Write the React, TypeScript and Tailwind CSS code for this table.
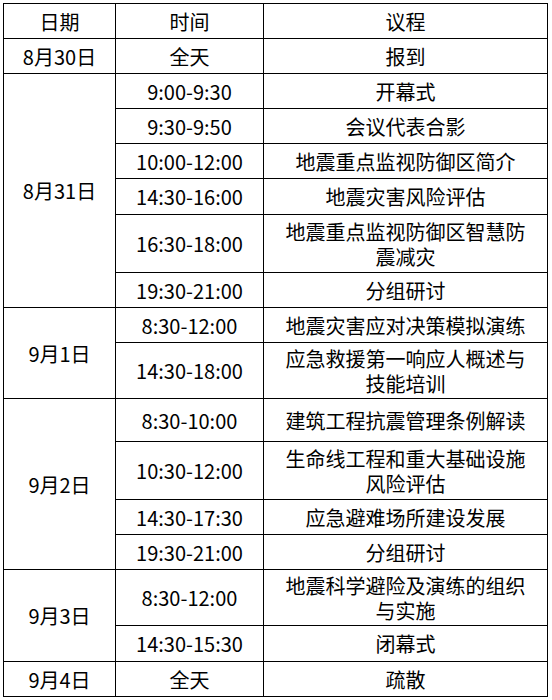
import { Fragment } from "react";

type Item = { time: string; agenda: string[]; h: number };
type Day = { date: string; items: Item[] };

const days: Day[] = [
  { date: "8月30日", items: [{ time: "全天", agenda: ["报到"], h: 35 }] },
  {
    date: "8月31日",
    items: [
      { time: "9:00-9:30", agenda: ["开幕式"], h: 35 },
      { time: "9:30-9:50", agenda: ["会议代表合影"], h: 35 },
      { time: "10:00-12:00", agenda: ["地震重点监视防御区简介"], h: 35 },
      { time: "14:30-16:00", agenda: ["地震灾害风险评估"], h: 36 },
      { time: "16:30-18:00", agenda: ["地震重点监视防御区智慧防", "震减灾"], h: 58 },
      { time: "19:30-21:00", agenda: ["分组研讨"], h: 35 },
    ],
  },
  {
    date: "9月1日",
    items: [
      { time: "8:30-12:00", agenda: ["地震灾害应对决策模拟演练"], h: 35 },
      { time: "14:30-18:00", agenda: ["应急救援第一响应人概述与", "技能培训"], h: 56 },
    ],
  },
  {
    date: "9月2日",
    items: [
      { time: "8:30-10:00", agenda: ["建筑工程抗震管理条例解读"], h: 43 },
      { time: "10:30-12:00", agenda: ["生命线工程和重大基础设施", "风险评估"], h: 58 },
      { time: "14:30-17:30", agenda: ["应急避难场所建设发展"], h: 35 },
      { time: "19:30-21:00", agenda: ["分组研讨"], h: 35 },
    ],
  },
  {
    date: "9月3日",
    items: [
      { time: "8:30-12:00", agenda: ["地震科学避险及演练的组织", "与实施"], h: 56 },
      { time: "14:30-15:30", agenda: ["闭幕式"], h: 36 },
    ],
  },
  { date: "9月4日", items: [{ time: "全天", agenda: ["疏散"], h: 35 }] },
];

const cell = "border border-black p-0 text-center align-middle";

export default function App() {
  return (
    <div
      className="min-h-[700px] w-[552px] bg-white pl-[3px] pt-[3px] text-[20px] leading-[25px] text-black"
      style={{ fontFamily: '"Noto Sans CJK SC", "Noto Sans", sans-serif' }}
    >
      <table className="w-[544px] table-fixed border-collapse">
        <colgroup>
          <col className="w-[112px]" />
          <col className="w-[148px]" />
          <col className="w-[284px]" />
        </colgroup>
        <tbody>
          <tr className="h-[35px]">
            <td className={cell}>日期</td>
            <td className={cell}>时间</td>
            <td className={cell}>议程</td>
          </tr>
          {days.map((d) => (
            <Fragment key={d.date}>
              {d.items.map((it, k) => (
                <tr key={k} style={{ height: it.h }}>
                  {k === 0 && (
                    <td className={cell} rowSpan={d.items.length}>
                      {d.date}
                    </td>
                  )}
                  <td className={cell}>{it.time}</td>
                  <td className={`${cell} whitespace-nowrap`}>
                    {it.agenda.map((line, j) => (
                      <Fragment key={j}>
                        {j > 0 && <br />}
                        {line}
                      </Fragment>
                    ))}
                  </td>
                </tr>
              ))}
            </Fragment>
          ))}
        </tbody>
      </table>
    </div>
  );
}
